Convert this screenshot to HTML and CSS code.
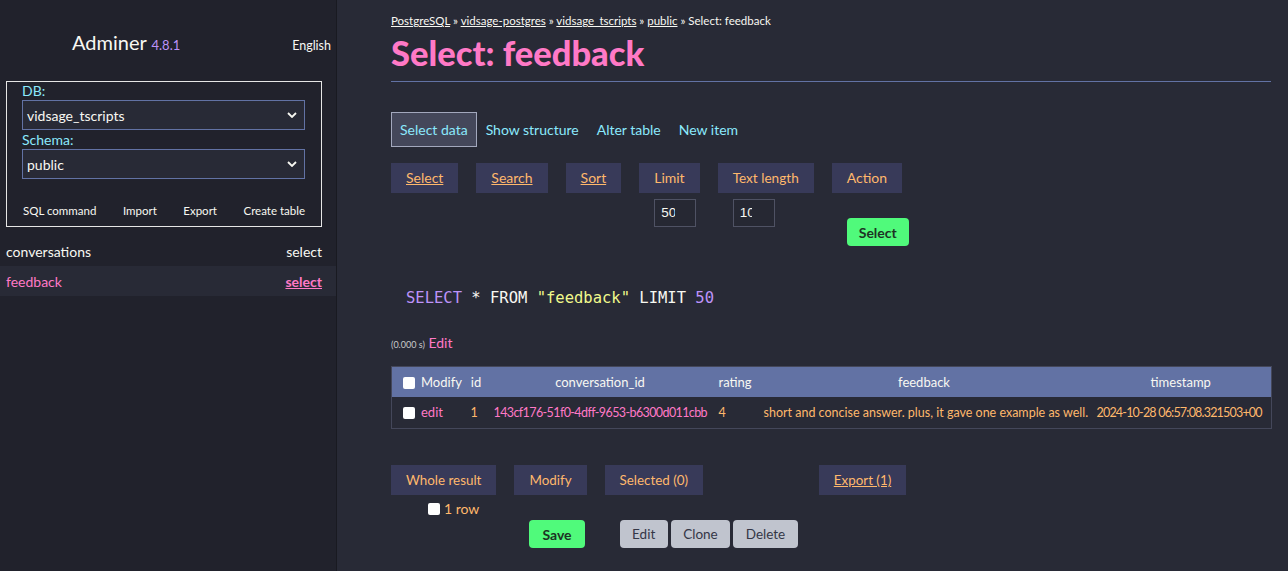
FILE: index.html
```html
<!DOCTYPE html>
<html lang="en">
<head>
<meta charset="utf-8">
<title>Select: feedback - Adminer</title>
<link rel="stylesheet" href="styles.css">
</head>
<body>
<div class="page">
  <aside class="sidebar">
    <div class="brand">
      <div class="logo">Adminer <span class="version">4.8.1</span></div>
      <div class="lang">English</div>
    </div>
    <form class="dbbox">
      <label class="lbl">DB:</label>
      <div class="sel"><span>vidsage_tscripts</span><svg class="chev" viewBox="0 0 10 6" width="10" height="6"><path d="M1 1l4 4 4-4" fill="none" stroke="#f8f8f2" stroke-width="1.8"/></svg></div>
      <label class="lbl">Schema:</label>
      <div class="sel"><span>public</span><svg class="chev" viewBox="0 0 10 6" width="10" height="6"><path d="M1 1l4 4 4-4" fill="none" stroke="#f8f8f2" stroke-width="1.8"/></svg></div>
      <div class="dblinks">
        <a>SQL command</a><a>Import</a><a>Export</a><a>Create table</a>
      </div>
    </form>
    <ul class="tables">
      <li class="trow"><a class="tname">conversations</a><a class="tsel">select</a></li>
      <li class="trow active"><a class="tname">feedback</a><a class="tsel">select</a></li>
    </ul>
  </aside>
  <main class="content">
    <p class="crumbs"><a>PostgreSQL</a> » <a>vidsage-postgres</a> » <a>vidsage_tscripts</a> » <a>public</a> » Select: feedback</p>
    <h2 class="title">Select: feedback</h2>
    <nav class="tabs">
      <a class="tab current">Select data</a>
      <a class="tab">Show structure</a>
      <a class="tab">Alter table</a>
      <a class="tab">New item</a>
    </nav>
    <div class="fsrow top">
      <div class="fs"><span class="legend"><u>Select</u></span></div>
      <div class="fs"><span class="legend"><u>Search</u></span></div>
      <div class="fs"><span class="legend"><u>Sort</u></span></div>
      <div class="fs"><span class="legend">Limit</span><div class="fsbody"><span class="inp"><span class="inp-val">50</span></span></div></div>
      <div class="fs"><span class="legend narrow">Text length</span><div class="fsbody"><span class="inp"><span class="inp-val tight">100</span></span></div></div>
      <div class="fs"><span class="legend">Action</span><div class="fsbody down"><button class="btn green">Select</button></div></div>
    </div>
    <pre class="sql"><span class="kw">SELECT</span> * FROM <span class="str">"feedback"</span> LIMIT <span class="num">50</span></pre>
    <p class="timing"><span class="time">(0.000 s)</span> <a class="pink">Edit</a></p>
    <table class="grid">
      <thead>
        <tr>
          <th class="c-mod"><span class="cb"></span>Modify</th>
          <th class="c-id">id</th>
          <th class="c-conv">conversation_id</th>
          <th class="c-rat">rating</th>
          <th class="c-fb">feedback</th>
          <th class="c-ts">timestamp</th>
        </tr>
      </thead>
      <tbody>
        <tr>
          <td class="c-mod"><span class="cb"></span><a class="pink">edit</a></td>
          <td class="c-id orange">1</td>
          <td class="c-conv pink uuid">143cf176-51f0-4dff-9653-b6300d011cbb</td>
          <td class="c-rat orange">4</td>
          <td class="c-fb orange">short and concise answer. plus, it gave one example as well.</td>
          <td class="c-ts orange stamp">2024-10-28 06:57:08.321503+00</td>
        </tr>
      </tbody>
    </table>
    <div class="fsrow bottom">
      <div class="fs"><span class="legend">Whole result</span><div class="fsbody rowchk"><span class="cb"></span><span class="orange">1 row</span></div></div>
      <div class="fs"><span class="legend">Modify</span><div class="fsbody down2"><button class="btn green save">Save</button></div></div>
      <div class="fs"><span class="legend">Selected (0)</span><div class="fsbody down2 btns"><button class="btn gray">Edit</button><button class="btn gray">Clone</button><button class="btn gray">Delete</button></div></div>
      <div class="fs"><span class="legend"><u>Export (1)</u></span></div>
    </div>
  </main>
</div>
</body>
</html>
```
FILE: styles.css
```css
* { box-sizing: border-box; }
html, body { margin: 0; height: 100%; }
body {
  background: #282a36;
  color: #f8f8f2;
  font-family: Lato, "Noto Sans", sans-serif;
  font-size: 14px;
}
a { color: inherit; text-decoration: none; }
.page { display: flex; min-height: 571px; }

/* sidebar */
.sidebar {
  width: 337px;
  flex: none;
  background: #21222c;
  border-right: 1px solid #191a21;
}
.brand {
  display: flex;
  justify-content: space-between;
  align-items: flex-start;
  padding: 30px 5px 0 72px;
  height: 70px;
}
.logo { font-size: 20px; color: #f8f8f2; line-height: 24px; }
.version { font-size: 13px; color: #bd93f9; }
.lang { font-size: 12.5px; padding-top: 8px; }
.dbbox {
  margin: 11px 14px 0 6px;
  border: 1px solid #e6e6e6;
  height: 146px;
  padding: 1px 16px 0 15px;
  display: flex;
  flex-direction: column;
}
.lbl { color: #8be9fd; font-size: 14px; line-height: 16px; }
.sel {
  height: 30px;
  border: 1px solid #6272a4;
  background: #282a36;
  display: flex;
  align-items: center;
  justify-content: space-between;
  padding: 0 7px 0 4px;
  font-size: 14px;
  margin-bottom: 2px;
}
.lbl + .sel { margin-top: 1px; }
.dblinks {
  display: flex;
  justify-content: space-between;
  font-size: 11.5px;
  margin-top: 23px;
  padding: 0 0 0 1px;
}
.tables { list-style: none; margin: 10px 0 0; padding: 0; }
.trow {
  display: flex;
  justify-content: space-between;
  align-items: center;
  height: 29px;
  padding: 0 14px 0 6px;
  font-size: 14px;
}
.trow.active { background: #282a36; color: #ff79c6; height: 30px; }
.trow.active .tsel { text-decoration: underline; font-weight: bold; }

/* main */
.content { padding: 13px 0 0 54px; flex: 1; }
.crumbs { margin: 0; font-size: 11.5px; line-height: 16px; }
.crumbs a { text-decoration: underline; }
.title {
  margin: 3px 0 0;
  width: 880px;
  font-size: 34.5px;
  font-weight: 900;
  color: #ff79c6;
  line-height: 42px;
  padding-bottom: 7px;
  border-bottom: 1px solid #6272a4;
}
.tabs { display: flex; align-items: center; margin-top: 30px; height: 35px; }
.tab { color: #8be9fd; margin-right: 18px; font-size: 14px; }
.tab.current {
  border: 1px solid #a3a8bd;
  background: #44475a;
  height: 35px;
  line-height: 33px;
  padding: 0 8px;
  margin-right: 9px;
}

.fsrow { display: flex; align-items: flex-start; }
.fsrow.top { margin-top: 16px; height: 90px; }
.fs { display: flex; flex-direction: column; align-items: flex-start; margin-right: 18px; }
.legend {
  background: #383a59;
  color: #ffb86c;
  height: 30px;
  line-height: 30px;
  padding: 0 15px;
  font-size: 13.4px;
  white-space: nowrap;
}
.top .legend { font-size: 14px; }
.top .legend.narrow { font-size: 13.6px; }
.fsbody { padding-left: 15px; margin-top: 6px; display: flex; }
.fsbody.down { margin-top: 25px; }
.inp {
  display: block;
  width: 42px;
  height: 28px;
  border: 1px solid #4f5264;
  background: #262833;
  padding-left: 6px;
}
.inp-val {
  display: block;
  width: 13.5px;
  overflow: hidden;
  white-space: nowrap;
  font-family: "Liberation Sans", Arial, sans-serif;
  font-size: 13.5px;
  line-height: 26px;
}
.inp-val.tight { width: 12px; }
.btn {
  font-family: inherit;
  border: 0;
  border-radius: 4px;
  height: 28px;
  font-size: 14px;
  padding: 0 12px;
  cursor: pointer;
}
.btn.green { background: #50fa7b; color: #1d3324; font-weight: bold; }
.btn.gray { background: #c0c4ce; color: #343746; margin-right: 3px; font-size: 13.5px; }

.sql {
  margin: 35px 0 0 15px;
  font-family: "DejaVu Sans Mono", "Liberation Mono", monospace;
  font-size: 15.5px;
  line-height: 20px;
  color: #f8f8f2;
}
.kw, .num { color: #bd93f9; }
.str { color: #f1fa8c; }
.timing { margin: 27px 0 0; font-size: 14px; line-height: 16px; }
.time { font-size: 9px; color: #c9c9c9; }
.pink { color: #ff79c6; }
.orange { color: #ffb86c; }

.grid {
  margin-top: 13px;
  border-collapse: collapse;
  border: 1px solid #44475a;
  width: 880px;
  table-layout: fixed;
  font-size: 13px;
}
.grid th {
  background: #6272a4;
  font-weight: normal;
  height: 30px;
  text-align: center;
  padding: 0 6px;
  white-space: nowrap;
}
.grid td { height: 32px; padding: 0 6px; white-space: nowrap; font-size: 12.5px; }
.grid th.c-mod { text-align: left; }
.grid .c-mod { width: 73px; padding-left: 11px; }
.grid td.c-mod { font-size: 13px; }
.c-id { width: 23px; }
.c-conv { width: 225px; }
.c-rat { width: 45px; }
.c-fb { width: 333px; }
.c-ts { width: 181px; }
.uuid { letter-spacing: -0.6px; }
.stamp { letter-spacing: -0.8px; }
.cb {
  display: inline-block;
  width: 12px;
  height: 12px;
  background: #fff;
  border-radius: 2px;
  vertical-align: -2px;
  margin-right: 6px;
}
.fsrow.bottom { margin-top: 36px; }
.rowchk { padding-left: 37px; margin-top: 5px; align-items: center; }
.rowchk .cb { margin-right: 4px; }
.fsbody.down2 { margin-top: 25px; }
.btns .btn { padding: 0 12.5px; }
.save { padding: 0 13px !important; }
```
